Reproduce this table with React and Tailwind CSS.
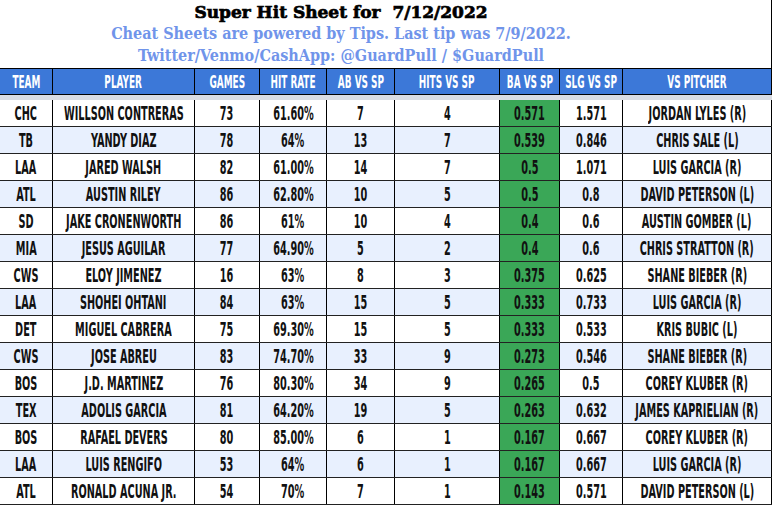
const COLS = ["w-[53px]", "w-[142px]", "w-[65px]", "w-[67px]", "w-[68px]", "w-[105px]", "w-[60px]", "w-[63px]", "w-[149px]"];

const HEADERS = ["TEAM", "PLAYER", "GAMES", "HIT RATE", "AB VS SP", "HITS VS SP", "BA VS SP", "SLG VS SP", "VS PITCHER"];

const ROWS = [
  ["CHC", "WILLSON CONTRERAS", "73", "61.60%", "7", "4", "0.571", "1.571", "JORDAN LYLES (R)"],
  ["TB", "YANDY DIAZ", "78", "64%", "13", "7", "0.539", "0.846", "CHRIS SALE (L)"],
  ["LAA", "JARED WALSH", "82", "61.00%", "14", "7", "0.5", "1.071", "LUIS GARCIA (R)"],
  ["ATL", "AUSTIN RILEY", "86", "62.80%", "10", "5", "0.5", "0.8", "DAVID PETERSON (L)"],
  ["SD", "JAKE CRONENWORTH", "86", "61%", "10", "4", "0.4", "0.6", "AUSTIN GOMBER (L)"],
  ["MIA", "JESUS AGUILAR", "77", "64.90%", "5", "2", "0.4", "0.6", "CHRIS STRATTON (R)"],
  ["CWS", "ELOY JIMENEZ", "16", "63%", "8", "3", "0.375", "0.625", "SHANE BIEBER (R)"],
  ["LAA", "SHOHEI OHTANI", "84", "63%", "15", "5", "0.333", "0.733", "LUIS GARCIA (R)"],
  ["DET", "MIGUEL CABRERA", "75", "69.30%", "15", "5", "0.333", "0.533", "KRIS BUBIC (L)"],
  ["CWS", "JOSE ABREU", "83", "74.70%", "33", "9", "0.273", "0.546", "SHANE BIEBER (R)"],
  ["BOS", "J.D. MARTINEZ", "76", "80.30%", "34", "9", "0.265", "0.5", "COREY KLUBER (R)"],
  ["TEX", "ADOLIS GARCIA", "81", "64.20%", "19", "5", "0.263", "0.632", "JAMES KAPRIELIAN (R)"],
  ["BOS", "RAFAEL DEVERS", "80", "85.00%", "6", "1", "0.167", "0.667", "COREY KLUBER (R)"],
  ["LAA", "LUIS RENGIFO", "53", "64%", "6", "1", "0.167", "0.667", "LUIS GARCIA (R)"],
  ["ATL", "RONALD ACUNA JR.", "54", "70%", "7", "1", "0.143", "0.571", "DAVID PETERSON (L)"],
];

const cond = { fontFamily: '"DejaVu Sans Condensed", "DejaVu Sans", sans-serif' };

const Squeeze = ({ children, className }) => (
  <span className={`inline-block whitespace-nowrap origin-center ${className}`}>
    {children}
  </span>
);

const App = () => {
  return (
    <div className="w-[773px] h-[505px] bg-white overflow-hidden">
      {/* TITLE */}
      <div className="w-[772px] h-[68px] border-r border-black pr-[89px] pt-[1px] text-center">
        <div
          className="text-[17px] leading-[22px] font-bold text-black [-webkit-text-stroke:0.7px_black]"
          style={{ fontFamily: '"DejaVu Serif", serif' }}
        >
          Super Hit Sheet for&nbsp; 7/12/2022
        </div>
        <div
          className="text-[16px] leading-[22px] font-bold text-[#7094ea] font-stretch-condensed"
          style={{ fontFamily: '"DejaVu Serif Condensed", "DejaVu Serif", serif' }}
        >
          <div>Cheat Sheets are powered by Tips. Last tip was 7/9/2022.</div>
          <div>Twitter/Venmo/CashApp: @GuardPull / $GuardPull</div>
        </div>
      </div>

      {/* HEADER */}
      <div
        className="flex w-[772px] h-[27px] border-y border-black bg-[#3c78d8] font-stretch-condensed"
        style={cond}
      >
        {HEADERS.map((h, i) => (
          <div
            key={h}
            className={`${COLS[i]} shrink-0 border-r border-black flex items-center justify-center`}
          >
            <Squeeze className="text-[18px] font-bold text-white scale-x-[0.55]">{h}</Squeeze>
          </div>
        ))}
      </div>

      {/* GAP */}
      <div className="w-[772px] h-[5px] bg-[#d9dce3]" />

      {/* ROWS */}
      {ROWS.map((row, r) => (
        <div
          key={r}
          className={`flex w-[772px] h-[27px] border-b border-[#222] font-stretch-condensed ${
            r % 2 === 1 ? "bg-[#e8f0fe]" : "bg-white"
          }`}
          style={cond}
        >
          {row.map((cell, i) => (
            <div
              key={i}
              className={`${COLS[i]} shrink-0 border-r border-black flex items-center justify-center ${
                i === 6 ? "bg-[#3aa757]" : ""
              }`}
            >
              <Squeeze className="text-[20px] font-bold text-[#111] scale-x-[0.54]">{cell}</Squeeze>
            </div>
          ))}
        </div>
      ))}
    </div>
  );
};

export default App;
